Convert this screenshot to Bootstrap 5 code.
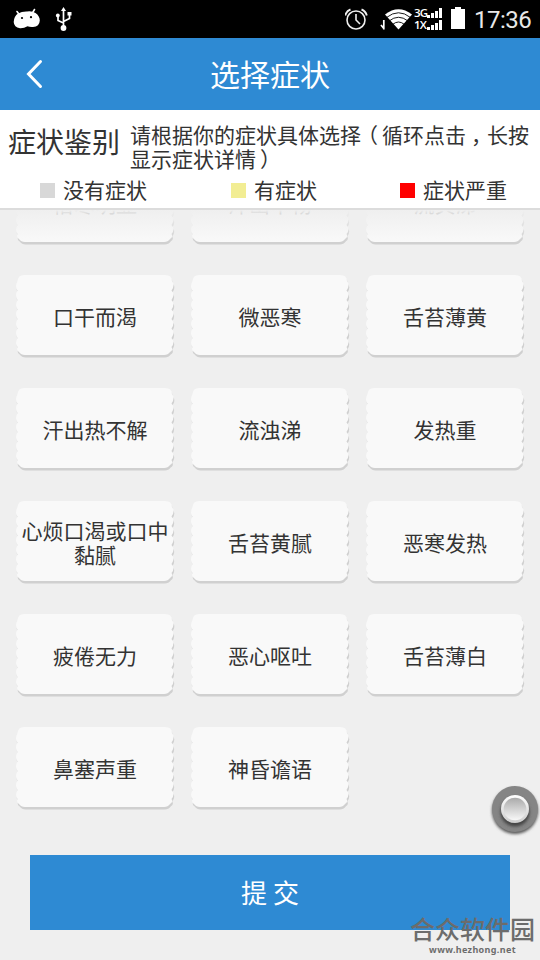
<!DOCTYPE html>
<html lang="zh-CN">
<head>
<meta charset="utf-8">
<meta name="viewport" content="width=device-width, initial-scale=1">
<title>选择症状</title>
<link href="https://cdn.jsdelivr.net/npm/bootstrap@5.3.0/dist/css/bootstrap.min.css" rel="stylesheet">
<style>
body{width:540px;height:960px;background:#efefef;color:#333;font-family:"Noto Sans CJK SC",sans-serif;font-size:21px;line-height:24px}
.statusbar{height:38px;flex:none;font-family:Roboto,sans-serif}
.clock{font-size:24px;line-height:36px;padding-top:2px;color:#e8e8e8;letter-spacing:-.5px}
.signal{font:600 11.5px/12px "Open Sans",sans-serif;letter-spacing:-.8px}
.titlebar{height:72px;background:#2e8ad3;flex:none}
.titlebar h1{font-size:30px;line-height:70px;font-weight:400}
.submit-row{padding:0 30px}
.blue-btn{background:#2e8ad3;height:75px;font-size:26px;padding:0 0 2px;--bs-btn-color:#fff;--bs-btn-hover-color:#fff;--bs-btn-hover-bg:#277bbd}
.intro{height:100px;flex:none;z-index:2;border-bottom:2px solid #dcdcdc}
.intro h2{font-size:28px;line-height:34px;width:122px;font-weight:400;padding-top:14px}
.hint{padding-top:12px;width:399px}
.shift-l{left:-4px}.shift-r{left:4px}.shift-c{left:5px}
.legend-row{height:24px;margin-top:8px}
.swatch{width:15px;height:15px;margin-right:8px;margin-top:1px}
.none-c{background:#d8d8d8}.some-c{background:#f2ed93}.bad-c{background:#f00}
.legend-a{margin-left:40px;width:191px}.legend-b{width:169px}
.list-pane{height:645px;flex:none}
.symptoms{display:grid;grid-template-columns:repeat(3,158px);grid-auto-rows:83px;gap:30px 17px;padding-left:16px;margin-top:-48px}
.tile{height:83px;padding:0 4px 2px}
.tile svg{left:0;top:0;overflow:visible}
.fade-top{height:32px;top:0;background:linear-gradient(#efefef,rgba(239,239,239,0))}
.float-btn{left:487px;top:782px}
.watermark{left:409px;top:913px;width:127px;color:#6c6c6c}
.watermark b{font-size:25px;line-height:31px;font-weight:500}
.watermark small{font:700 9px/12px "Noto Sans",sans-serif;letter-spacing:.35px}
</style>
</head>
<body class="d-flex flex-column overflow-hidden position-relative">
<svg width="0" height="0" class="position-absolute">
<path id="tile" d="M8 0H149Q156 0 156 6Q159.500 10 155.500 15.500Q159.500 19 155.500 25Q159.500 29 155.500 34.500Q159.500 38 155.500 44Q159.500 48 155.500 53.500Q159.500 57 155.500 63Q159.500 67 155.500 72Q157.500 75 154 77Q152 80 148 80H9Q5 80 3 77Q0 75 1.500 72Q-1.500 68 1.500 63Q-1.500 58 1.500 53.500Q-1.500 49 1.500 44Q-1.500 39 1.500 34.500Q-1.500 30 1.500 25Q-1.500 20 1.500 15.500Q-1.500 12 1.500 6Q2 0 8 0Z"/>
</svg>
<div class="statusbar bg-black text-white d-flex align-items-center">
<svg width="345" height="38" viewBox="0 0 345 38" fill="#fff"><path d="M18.500 13.500L17 11.500M33 12L34.500 9.500" stroke="#fff" stroke-width="1.600" stroke-linecap="round"/><path d="M18 13.500Q22 11.300 27 11.500Q32 10.800 35.500 13Q39.800 16 39.800 20.500Q39.500 26.500 33 27Q29.500 27.200 27.500 26.200Q24 28.500 20 28.300Q14 27.500 13.700 22Q14 16 18 13.500Z"/><circle cx="22" cy="18" r="1.100" fill="#000"/><circle cx="31" cy="17.200" r="1.100" fill="#000"/>
<g fill="none" stroke="#fff" stroke-width="1.700"><path d="M63.500 10V28M63.500 23L58 20.500V16M63.500 21.500L69.500 18.500V14"/></g><path d="M63.500 7L66 11H61Z"/><circle cx="63.500" cy="28" r="2.900"/><circle cx="57.800" cy="15.500" r="1.900"/><path d="M67.500 12H71.500V15.500H67.500Z"/></svg>
<svg width="69" height="38" viewBox="345 0 69 38"><g fill="none" stroke="#eee"><circle cx="356" cy="20" r="9" stroke-width="1.600"/><path d="M356 14V20L360 24" stroke-width="1.600"/><path d="M345.200 15.500Q346.500 11 350.500 9.500M361.500 9.500Q365.500 11 366.800 15.500" stroke-width="1.900"/></g>
<path d="M383.800 20V29.500M381 25L383.800 28.500" fill="none" stroke="#fff" stroke-width="1.700"/><path fill="#fff" d="M398.500 29.500L385 14.500Q398.500 4 412 14.500Z"/><g fill="none" stroke="#000" stroke-width=".9"><path d="M386.500 17.500Q398.500 8 410.500 17.500M389 21Q398.500 13.500 408 21M392.500 24.500Q398.500 19.500 404.500 24.500"/></g></svg>
<div class="signal"><div>3G</div><div>1X</div></div>
<svg class="position-absolute signal-bars" width="47" height="38" viewBox="427 0 47 38" fill="#fff"><path d="M427 15h3v3h-3zM431 13h3v5h-3zM435 11h3v7h-3zM439 8h3v10h-3zM427 27h3v3h-3zM431 25h3v5h-3zM435 23h3v7h-3zM439 20h3v10h-3zM451 9h4V7h6v2h4v20h-14z"/></svg>
<div class="clock position-absolute">17:36</div>
</div>
<style>.signal-bars{left:427px;top:0}.clock{left:474px;top:0}</style>
<header class="titlebar position-relative text-white text-center">
<h1 class="m-0">选择症状</h1>
<svg class="position-absolute top-0 start-0" width="60" height="72"><path d="M40.500 23.500L28.500 36L40.500 48.500" fill="none" stroke="#fff" stroke-width="3" stroke-linecap="round"/></svg>
</header>
<section class="intro bg-white position-relative">
<div class="d-flex"><h2 class="m-0 ps-2 text-nowrap">症状鉴别</h2><div class="hint ms-2 text-nowrap">请根据你的症状具体选择<span class="position-relative shift-l">（</span>循环点击<span class="position-relative shift-c">，</span>长按<br>显示症状详情<span class="position-relative shift-r">）</span></div></div>
<div class="legend-row d-flex">
<div class="d-flex align-items-start legend-a"><i class="swatch none-c"></i><span class="legend-t">没有症状</span></div>
<div class="d-flex align-items-start legend-b"><i class="swatch some-c"></i><span class="legend-t">有症状</span></div>
<div class="d-flex align-items-start"><i class="swatch bad-c"></i><span class="legend-t">症状严重</span></div>
</div>
</section>
<style>.legend-row{padding-top:4px}.legend-t{margin-top:-5px}</style>
<main class="list-pane position-relative overflow-hidden">
<div class="symptoms" id="symptoms"></div>
<div class="fade-top position-absolute w-100"></div>
</main>
<div class="submit-row"><button class="btn blue-btn rounded-0 border-0 w-100 d-block">提 交</button></div>
<svg class="float-btn position-absolute" width="53" height="56" viewBox="0 0 53 56">
<defs><linearGradient id="g" x2="0" y2="1"><stop stop-color="#aaa"/><stop offset="1" stop-color="#f8f8f8"/></linearGradient><linearGradient id="r" x2="0" y2="1"><stop stop-color="#fff"/><stop offset="1" stop-color="#ccc"/></linearGradient><filter id="b" x="-20%" y="-20%" width="140%" height="140%"><feGaussianBlur stdDeviation="1.500"/></filter></defs>
<circle cx="28" cy="29" r="23" fill="#555" filter="url(#b)"/><circle cx="28" cy="27" r="23" fill="#858585"/><circle cx="28" cy="30" r="14.500" fill="#444" filter="url(#b)"/><circle cx="28" cy="27" r="14" fill="url(#r)"/><circle cx="28" cy="27" r="11.300" fill="url(#g)"/></svg>
<div class="watermark position-absolute text-center text-nowrap"><b class="d-block">合众软件园</b><small class="d-block">www.hezhong.net</small></div>
<script>
document.getElementById("symptoms").innerHTML=["憎寒明显","汗出不畅","流黄涕","口干而渴","微恶寒","舌苔薄黄","汗出热不解","流浊涕","发热重","心烦口渴或口中黏腻","舌苔黄腻","恶寒发热","疲倦无力","恶心呕吐","舌苔薄白","鼻塞声重","神昏谵语"].map(t=>`<div class="tile position-relative d-flex align-items-center justify-content-center text-center"><svg class="position-absolute" width="158" height="83"><use href="#tile" x=".7" y="2.500" fill="#d0d0d0"/><use href="#tile" fill="#f9f9f9"/></svg><span class="position-relative">${t}</span></div>`).join("");
</script>
<script src="https://cdn.jsdelivr.net/npm/bootstrap@5.3.0/dist/js/bootstrap.bundle.min.js"></script>
</body>
</html>
